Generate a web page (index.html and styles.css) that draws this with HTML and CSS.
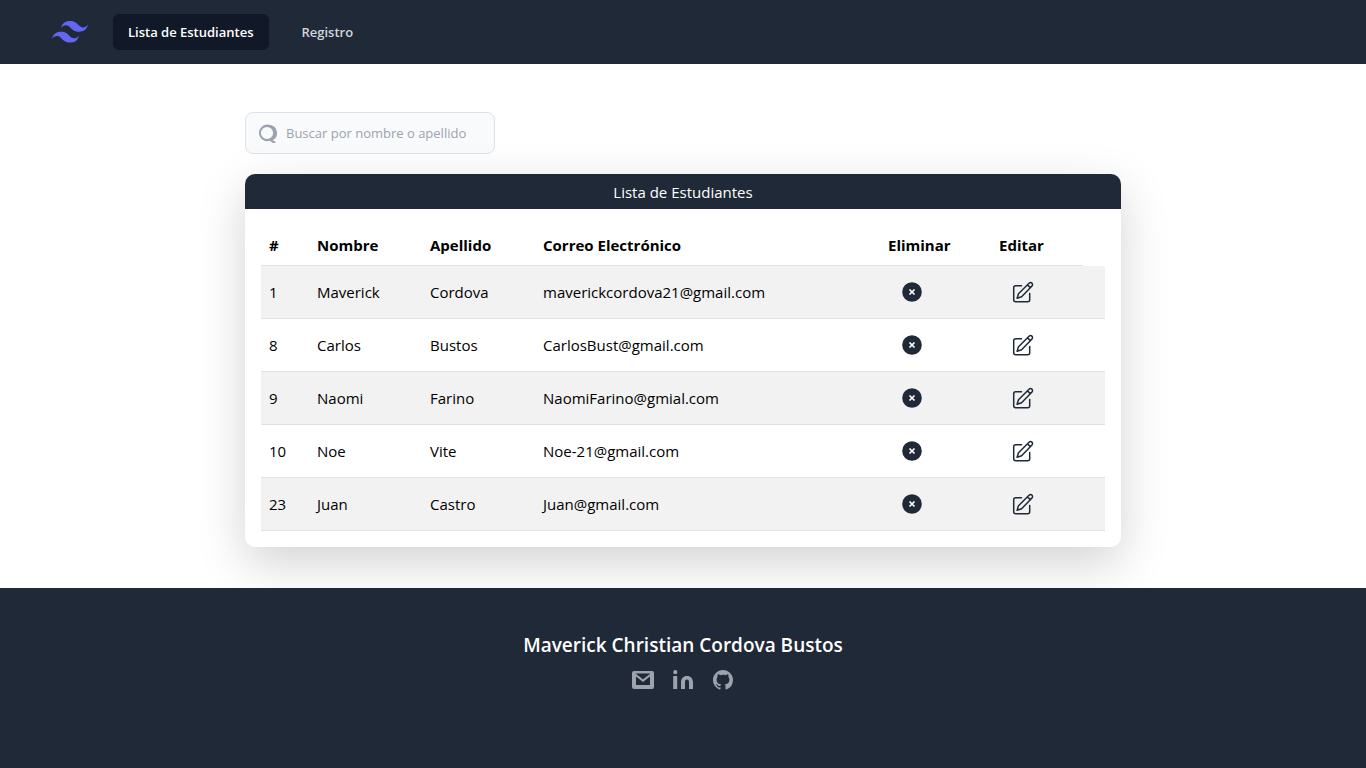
FILE: index.html
```html
<!DOCTYPE html>
<html lang="es">
<head>
<meta charset="utf-8">
<meta name="viewport" content="width=device-width, initial-scale=1">
<title>Lista de Estudiantes</title>
<link rel="stylesheet" href="styles.css">
</head>
<body>
<svg class="sprite" aria-hidden="true">
  <symbol id="remove" viewBox="0 0 22 22">
    <circle cx="11" cy="11" r="9.8" fill="currentColor"/>
    <path d="M8.500 8.500l5 5M13.500 8.500l-5 5" stroke="#fff" stroke-width="1.700"/>
  </symbol>
  <symbol id="edit" viewBox="0 0 22 22" fill="none" stroke="currentColor" stroke-width="1.5" stroke-linejoin="round" stroke-linecap="round">
    <path d="M9.5 4.7H3.7a2 2 0 0 0-2 2v12a2 2 0 0 0 2 2h12a2 2 0 0 0 2-2v-6.2"/>
    <path d="M17 2.200a2 2 0 0 1 3 2.800L9.600 15.800l-4.500 1.500 1.400-4.600zM15.400 3.900l3 2.700"/>
  </symbol>
</svg>
<header class="navbar">
  <a class="brand" href="#" aria-label="Inicio">
    <svg viewBox="0 0 54 33" fill="currentColor" aria-hidden="true"><path d="M27 0c-7.2 0-11.7 3.6-13.5 10.8 2.7-3.6 5.85-4.95 9.45-4.05 2.054.513 3.522 2.004 5.147 3.653C30.744 13.09 33.808 16.2 40.5 16.2c7.2 0 11.7-3.6 13.5-10.8-2.7 3.6-5.85 4.95-9.45 4.05-2.054-.513-3.522-2.004-5.147-3.653C36.756 3.11 33.692 0 27 0zM13.5 16.2C6.3 16.2 1.8 19.8 0 27c2.7-3.6 5.85-4.95 9.45-4.05 2.054.514 3.522 2.004 5.147 3.653C17.244 29.29 20.308 32.4 27 32.4c7.2 0 11.7-3.6 13.5-10.8-2.7 3.6-5.85 4.95-9.45 4.05-2.054-.513-3.522-2.004-5.147-3.653C23.256 19.31 20.192 16.2 13.5 16.2z"/></svg>
  </a>
  <nav class="nav">
    <a class="nav-link active" href="#" aria-current="page">Lista de Estudiantes</a>
    <a class="nav-link" href="#registro">Registro</a>
  </nav>
</header>
<main class="content">
  <label class="search">
    <svg viewBox="0 0 20 20" aria-hidden="true"><path fill="currentColor" fill-rule="evenodd" d="M10.800 1.700a8.300 8.300 0 0 1 3.800 15.600l3 1.500-.5 1.200h-2.300l-3-2.200A8.300 8.300 0 1 1 10.800 1.700zM9 3.900a6.100 6.100 0 1 0 0 12.200 6.100 6.100 0 0 0 0-12.200z"/></svg>
    <input type="search" placeholder="Buscar por nombre o apellido" aria-label="Buscar por nombre o apellido">
  </label>
  <section class="card">
    <h1 class="card-title">Lista de Estudiantes</h1>
    <div class="card-body">
      <table class="students">
        <colgroup><col class="c-id"><col class="c-name"><col class="c-name"><col class="c-mail"><col class="c-remove"><col class="c-edit"><col></colgroup>
        <thead><tr><th scope="col">#</th><th scope="col">Nombre</th><th scope="col">Apellido</th><th scope="col">Correo Electrónico</th><th scope="col">Eliminar</th><th scope="col">Editar</th></tr></thead>
        <tbody>
          <tr><td>1</td><td>Maverick</td><td>Cordova</td><td>maverickcordova21@gmail.com</td><td><button class="action" aria-label="Eliminar"><svg class="i-remove"><use href="#remove"/></svg></button></td><td><button class="action" aria-label="Editar"><svg class="i-edit"><use href="#edit"/></svg></button></td><td></td></tr>
          <tr><td>8</td><td>Carlos</td><td>Bustos</td><td>CarlosBust@gmail.com</td><td><button class="action" aria-label="Eliminar"><svg class="i-remove"><use href="#remove"/></svg></button></td><td><button class="action" aria-label="Editar"><svg class="i-edit"><use href="#edit"/></svg></button></td><td></td></tr>
          <tr><td>9</td><td>Naomi</td><td>Farino</td><td>NaomiFarino@gmial.com</td><td><button class="action" aria-label="Eliminar"><svg class="i-remove"><use href="#remove"/></svg></button></td><td><button class="action" aria-label="Editar"><svg class="i-edit"><use href="#edit"/></svg></button></td><td></td></tr>
          <tr><td>10</td><td>Noe</td><td>Vite</td><td>Noe-21@gmail.com</td><td><button class="action" aria-label="Eliminar"><svg class="i-remove"><use href="#remove"/></svg></button></td><td><button class="action" aria-label="Editar"><svg class="i-edit"><use href="#edit"/></svg></button></td><td></td></tr>
          <tr><td>23</td><td>Juan</td><td>Castro</td><td>Juan@gmail.com</td><td><button class="action" aria-label="Eliminar"><svg class="i-remove"><use href="#remove"/></svg></button></td><td><button class="action" aria-label="Editar"><svg class="i-edit"><use href="#edit"/></svg></button></td><td></td></tr>
        </tbody>
      </table>
    </div>
  </section>
</main>
<footer class="footer">
  <p class="author">Maverick Christian Cordova Bustos</p>
  <div class="social">
    <a href="#correo" aria-label="Correo"><svg viewBox="0 0 24 24"><path fill="currentColor" fill-rule="evenodd" d="M3 3h18a2 2 0 0 1 2 2v14a2 2 0 0 1-2 2H3a2 2 0 0 1-2-2V5a2 2 0 0 1 2-2zM5 8.500v8.500h14V8.500l-7 5.500zM4.500 5.500L12 11.300l7.500-5.800z"/></svg></a>
    <a href="#linkedin" aria-label="LinkedIn"><svg viewBox="0 0 24 24"><path fill="currentColor" d="M6.400 4.200a2.100 2.100 0 1 1-4.200 0 2.100 2.100 0 0 1 4.200 0zM2.200 8h4v13h-4zM10 21V14.500C10 10.500 12.300 8 16 8s6 2.500 6 6.500V21h-4v-6.800c0-1.700-.7-2.700-2-2.700s-2 1-2 2.700V21z"/></svg></a>
    <a href="#github" aria-label="GitHub"><svg viewBox="0 0 24 24"><path fill="currentColor" d="M12 2C6.477 2 2 6.484 2 12.017c0 4.425 2.865 8.180 6.839 9.504.5.092.682-.217.682-.483 0-.237-.008-.868-.013-1.703-2.782.605-3.369-1.343-3.369-1.343-.454-1.158-1.110-1.466-1.110-1.466-.908-.620.069-.608.069-.608 1.003.070 1.531 1.032 1.531 1.032.892 1.530 2.341 1.088 2.910.832.092-.647.350-1.088.636-1.338-2.220-.253-4.555-1.113-4.555-4.951 0-1.093.390-1.988 1.029-2.688-.103-.253-.446-1.272.098-2.650 0 0 .840-.270 2.750 1.026A9.564 9.564 0 0 1 12 6.844c.850.004 1.705.115 2.504.337 1.909-1.296 2.747-1.027 2.747-1.027.546 1.379.202 2.398.100 2.651.640.700 1.028 1.595 1.028 2.688 0 3.848-2.339 4.695-4.566 4.943.359.309.678.920.678 1.855 0 1.338-.012 2.419-.012 2.747 0 .268.180.580.688.482A10.019 10.019 0 0 0 22 12.017C22 6.484 17.522 2 12 2z"/></svg></a>
  </div>
</footer>
</body>
</html>
```
FILE: styles.css
```css
* { box-sizing: border-box; }
body {
  margin: 0;
  min-height: 100vh;
  display: flex;
  flex-direction: column;
  font-family: "Segoe UI", "Open Sans", "Noto Sans", sans-serif;
  font-size: 15px;
  line-height: 24px;
  color: #000;
  background: #fff;
}
svg { display: block; }
.sprite { display: none; }
.navbar {
  display: flex;
  align-items: center;
  gap: 24px;
  height: 64px;
  padding: 0 51px;
  background: #1f2937;
}
.brand { color: #6366f1; }
.brand svg { width: 38px; height: 22px; }
.nav { display: flex; gap: 18px; }
.nav-link {
  padding: 8px 15px;
  border-radius: 6px;
  color: #d1d5db;
  font-size: 13px;
  font-weight: 600;
  line-height: 20px;
  text-decoration: none;
}
.nav-link.active { background: #111827; color: #fff; }
.content {
  flex: 1;
  width: 100%;
  max-width: 908px;
  margin: 0 auto;
  padding: 48px 16px 41px;
}
.search {
  display: flex;
  align-items: center;
  gap: 8px;
  width: 250px;
  height: 42px;
  margin-bottom: 20px;
  padding: 0 12px;
  border: 1px solid #dee2e6;
  border-radius: 8px;
  background: #f9fafb;
  color: #9ca3af;
}
.search svg { flex: none; width: 20px; height: 20px; }
.search input {
  flex: 1;
  min-width: 0;
  padding: 0;
  border: 0;
  outline: 0;
  background: transparent;
  color: #111827;
  font: inherit;
  font-size: 13px;
}
.search input::placeholder { color: #9ca3af; }
.card {
  border-radius: 10px;
  background: #fff;
  box-shadow: 0 16px 48px rgba(0, 0, 0, .175);
}
.card-title {
  margin: 0;
  padding: 6px 16px 5px;
  border-radius: 10px 10px 0 0;
  background: #1f2937;
  color: #fff;
  font-size: 15px;
  font-weight: 400;
  text-align: center;
}
.card-body { padding: 16px; overflow-x: auto; }
.students {
  width: 100%;
  table-layout: fixed;
  border-collapse: separate;
  border-spacing: 0;
}
.c-id { width: 48px; }
.c-name { width: 113px; }
.c-remove { width: 111px; }
.c-edit { width: 92px; }
.students col:last-child { width: 22px; }
.students th, .students td {
  padding: 8px;
  border-bottom: 1px solid #dee2e6;
  text-align: left;
  white-space: nowrap;
}
.students th { font-weight: 700; }
.students td { height: 53px; }
.students td:last-child { padding: 0; }
.students tbody tr:nth-child(odd) { background: #f2f2f2; }
.action {
  display: block;
  padding: 0 13px;
  border: 0;
  background: none;
  color: #1f2937;
  cursor: pointer;
}
.i-remove, .i-edit { width: 22px; height: 22px; }
.footer {
  position: relative;
  min-height: 180px;
  padding: 43px 16px;
  background: #1f2937;
  text-align: center;
}
.author {
  margin: 0 0 9px;
  color: #fff;
  font-size: 19px;
  font-weight: 600;
  line-height: 28px;
}
.social { display: flex; justify-content: center; gap: 16px; }
.social a { color: #9ca3af; }
.social svg { width: 24px; height: 24px; }
```
